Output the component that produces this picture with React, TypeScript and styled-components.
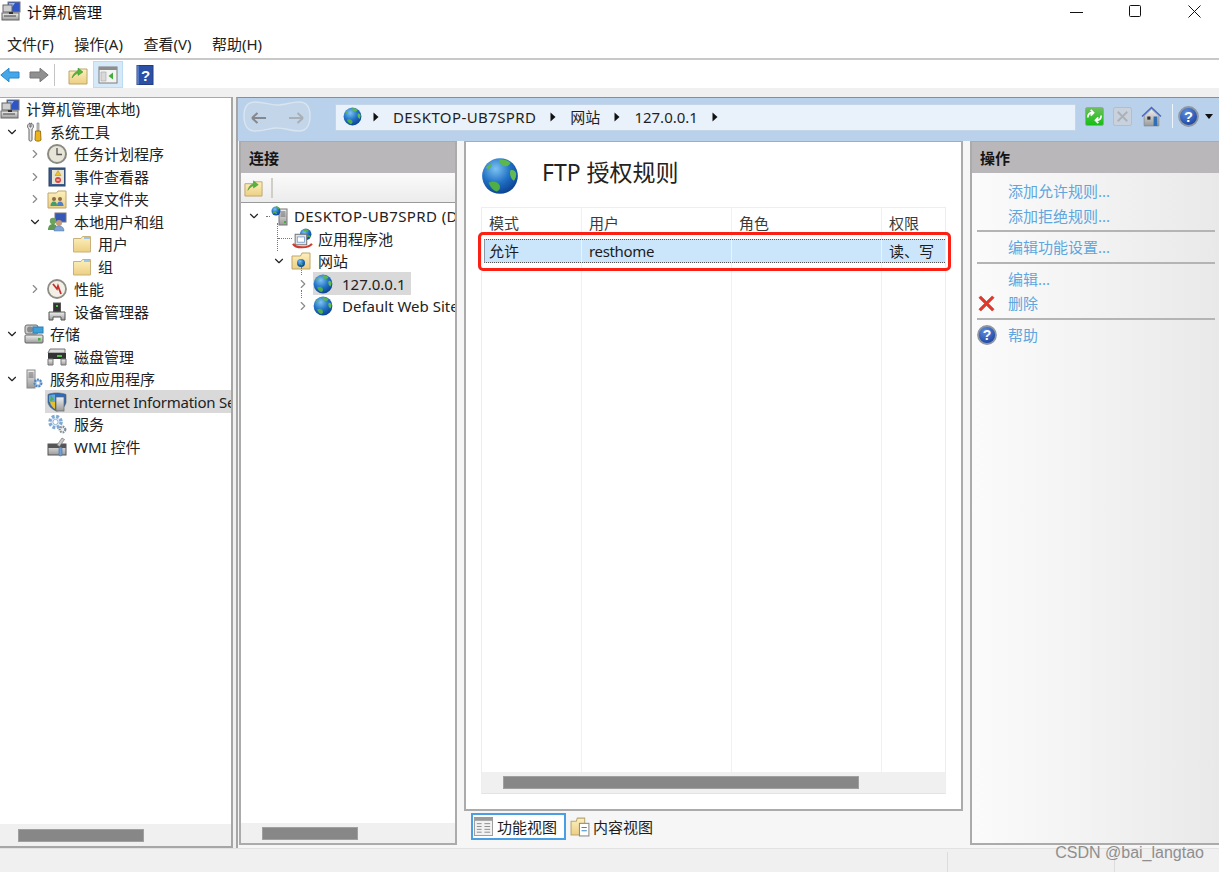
import React from 'react';
import styled, { createGlobalStyle } from 'styled-components';
import { ChevronDown, ChevronRight } from 'lucide-react';

const GlobalStyle = createGlobalStyle`
    html, body {
        margin: 0;
        padding: 0;
        background: #fff;
    }
    * {
        box-sizing: border-box;
    }
`;

const Window = styled.div`
    position: relative;
    width: 1219px;
    height: 872px;
    overflow: hidden;
    display: flex;
    flex-direction: column;
    background: #f0f0f0;
    color: #222;
    font-family: "Noto Sans", "Noto Sans CJK SC", sans-serif;
    font-size: 15px;
    line-height: 22px;
`;

const TitleBar = styled.div`
    height: 32px;
    flex: none;
    display: flex;
    align-items: flex-start;
    background: #fff;
    padding: 1px 0 0 1px;
`;

const TitleText = styled.div`
    margin-left: 6px;
    color: #111;
`;

const WindowButtons = styled.div`
    margin-left: auto;
    display: flex;
    gap: 46px;
    padding: 4px 18px 0 0;
`;

const MenuBar = styled.div`
    height: 28px;
    flex: none;
    display: flex;
    gap: 20.5px;
    padding: 1px 0 0 7px;
    background: #fff;
    border-bottom: 2px solid #c9c9c9;
`;

const ToolBar = styled.div`
    height: 28px;
    flex: none;
    display: flex;
    align-items: center;
    padding-top: 2px;
    background: #fff;
`;

const ToolSep = styled.div`
    width: 1px;
    height: 22px;
    margin: 0 13px 0 5px;
    background: #c4c4c4;
`;

const ToolToggle = styled.div`
    width: 30px;
    height: 27px;
    margin: -1px 12px 0 5px;
    display: flex;
    align-items: center;
    justify-content: center;
    background: #d5e9f8;
    border: 1px solid #bcdcf4;
`;

const Strip = styled.div`
    height: 9px;
    flex: none;
    background: #f0f0f0;
`;

const Main = styled.div`
    flex: 1;
    min-height: 0;
    display: flex;
    gap: 3px;
`;

const LeftPane = styled.div`
    width: 233px;
    flex: none;
    display: flex;
    flex-direction: column;
    background: #fff;
    border-top: 1px solid #a9a9a9;
    border-right: 2px solid #a6a6a6;
    border-bottom: 2px solid #a6a6a6;
`;

const TreeBox = styled.div<{ $top?: number }>`
    flex: 1;
    min-height: 0;
    overflow: hidden;
    position: relative;
    padding-top: ${(p) => p.$top ?? 0}px;
    background: #fff;
`;

const Row = styled.div<{ $indent: number }>`
    height: 22.5px;
    display: flex;
    align-items: center;
    white-space: nowrap;
    padding-left: ${(p) => p.$indent}px;
`;

const Twisty = styled.span<{ $open: boolean; $width: number }>`
    width: ${(p) => p.$width}px;
    flex: none;
    display: flex;
    align-items: center;
    padding-left: 5px;
    color: ${(p) => (p.$open ? '#222' : '#8a8a8a')};
`;

const Spacer = styled.span<{ $width: number }>`
    width: ${(p) => p.$width}px;
    flex: none;
`;

const Node = styled.span<{ $selected?: boolean; $gap: number; $grow?: boolean }>`
    display: flex;
    align-items: center;
    gap: ${(p) => p.$gap}px;
    height: 23px;
    padding-right: 5px;
    ${(p) => (p.$grow ? 'flex: 1; margin-left: -2px; padding-left: 2px;' : '')}
    background: ${(p) => (p.$selected ? '#d9d9d9' : 'transparent')};
`;

const Label = styled.span<{ $track?: number }>`
    letter-spacing: ${(p) => p.$track ?? 0}px;
`;

const HScroll = styled.div<{ $height: number; $pad: number }>`
    height: ${(p) => p.$height}px;
    flex: none;
    background: #f0f0f0;
    display: flex;
    align-items: center;
    padding-left: ${(p) => p.$pad}px;
`;

const Thumb = styled.div<{ $width: number; $height: number }>`
    width: ${(p) => p.$width}px;
    height: ${(p) => p.$height}px;
    background: #878787;
    border: 1px solid #a0a0a0;
`;

const IisPane = styled.div`
    flex: 1;
    min-width: 0;
    display: flex;
    flex-direction: column;
    border-top: 1px solid #8d8d8d;
    border-left: 2px solid #a6a6a6;
    background: #f6f6f6;
`;

const IisHeader = styled.div`
    height: 43px;
    flex: none;
    display: flex;
    align-items: flex-start;
    padding: 3px 0 0 5px;
    background: #b9d1ea;
`;

const AddressBar = styled.div`
    width: 741px;
    height: 27px;
    margin: 3px 0 0 24px;
    flex: none;
    display: flex;
    align-items: center;
    gap: 14px;
    padding: 0 0 2px 7px;
    background: #e9f1fa;
    border: 1px solid #c4d5e8;
`;

const AddressGlobe = styled.span`
    margin-right: -3px;
    display: flex;
`;

const Crumb = styled.span`
    color: #1f1f1f;
`;

const HeaderTools = styled.div`
    display: flex;
    align-items: center;
    margin: 3px 0 0 9px;
    gap: 9px;
`;

const HeaderSep = styled.span`
    width: 1px;
    height: 24px;
    margin: 0 -4px 0 1px;
    background: #eef4fb;
`;

const Panels = styled.div`
    flex: 1;
    min-height: 0;
    display: flex;
    padding: 0 0 3px 1px;
`;

const ConnPanel = styled.div`
    width: 218px;
    flex: none;
    display: flex;
    flex-direction: column;
    background: #fff;
    border: 2px solid #ababab;
    border-top-width: 1px;
`;

const PanelHeader = styled.div`
    height: 31px;
    flex: none;
    display: flex;
    align-items: center;
    padding-left: 8px;
    font-weight: 700;
    font-size: 15px;
    color: #151515;
    background: #b9b7b9;
`;

const ConnTools = styled.div`
    height: 30px;
    flex: none;
    display: flex;
    align-items: center;
    gap: 8px;
    padding-left: 3px;
    background: linear-gradient(#fafafa, #ececec);
    border-bottom: 1px solid #9a9a9a;
`;

const ConnToolSep = styled.span`
    width: 2px;
    height: 20px;
    background: #cfcfc8;
`;

const ConnectorV = styled.span<{ $left: number; $top: number; $height: number }>`
    position: absolute;
    left: ${(p) => p.$left}px;
    top: ${(p) => p.$top}px;
    height: ${(p) => p.$height}px;
    border-left: 1px dotted #777;
`;

const ConnectorH = styled.span<{ $width: number }>`
    width: ${(p) => p.$width}px;
    flex: none;
    border-top: 1px dotted #777;
`;

const CenterCol = styled.div`
    width: 513px;
    flex: none;
    display: flex;
    flex-direction: column;
    padding: 0 7px;
`;

const FeaturePanel = styled.div`
    height: 670px;
    flex: none;
    display: flex;
    flex-direction: column;
    padding: 15px 15px 15px 15px;
    background: #fff;
    border: 2px solid #ababab;
    border-top-width: 1px;
`;

const FeatureTitle = styled.div`
    height: 38px;
    flex: none;
    display: flex;
    align-items: center;
    gap: 23px;
    margin-bottom: 12px;
    font-size: 23px;
    color: #222;
`;

const TitleLabel = styled.span`
    margin-top: -8px;
`;

const Table = styled.div`
    position: relative;
    flex: 1;
    min-height: 0;
    display: flex;
    flex-direction: column;
    border: 1px solid #eceef2;
    border-bottom: 1px solid #e4e4e4;
`;

const Columns = styled.div`
    flex: 1;
    min-height: 0;
    display: flex;
`;

const Column = styled.div<{ $width?: number }>`
    ${(p) => (p.$width ? `width: ${p.$width}px; flex: none;` : 'flex: 1;')}
    display: flex;
    flex-direction: column;
    border-right: 1px solid #eef1f6;
    &:last-child {
        border-right: 0;
    }
`;

const HeadCell = styled.div`
    height: 31px;
    flex: none;
    padding: 4px 0 0 7px;
    color: #3b3b3b;
    white-space: nowrap;
`;

const BodyCell = styled.div<{ $first?: boolean }>`
    height: 24px;
    flex: none;
    display: flex;
    align-items: center;
    padding-left: ${(p) => (p.$first ? 4 : 7)}px;
    margin-left: ${(p) => (p.$first ? 2 : 0)}px;
    white-space: nowrap;
    color: #1c1c1c;
    background: #cbe5fb;
    border-top: 1px dotted #555;
    border-bottom: 1px dotted #555;
    ${(p) => (p.$first ? 'border-left: 1px solid #8a9aa8;' : '')}
`;

const RedMark = styled.div`
    position: absolute;
    left: -4px;
    top: 24px;
    width: 473px;
    height: 39px;
    border: 3px solid #fb2014;
    border-radius: 5px;
`;

const ViewTabs = styled.div`
    flex: 1;
    display: flex;
    align-items: flex-start;
    gap: 4px;
    padding: 2px 0 0 7px;
`;

const ViewTab = styled.div<{ $active?: boolean }>`
    height: 27px;
    display: flex;
    align-items: center;
    gap: ${(p) => (p.$active ? 4 : 2)}px;
    padding: 0 7px 0 ${(p) => (p.$active ? 1 : 0)}px;
    ${(p) => (p.$active ? 'background: #fff; border: 2px solid #4a9fe4;' : '')}
    color: #1c1c1c;
`;

const ActionsPanel = styled.div`
    flex: 1;
    min-width: 0;
    display: flex;
    flex-direction: column;
    background: linear-gradient(to right, #fbfbfb, #f4f4f4 40%, #e9e9e9);
    border-top: 1px solid #ababab;
    border-left: 2px solid #ababab;
    border-bottom: 2px solid #ababab;
`;

const ActionList = styled.div`
    padding: 6px 4px 0 5px;
    display: flex;
    flex-direction: column;
`;

const ActionRow = styled.div`
    height: 24.5px;
    display: flex;
    align-items: center;
    color: #5ea6de;
`;

const ActionIcon = styled.span`
    width: 31px;
    flex: none;
    display: flex;
    align-items: center;
`;

const ActionDivider = styled.div`
    height: 2px;
    margin: 2px 0 3px 0;
    background: #b4b4b4;
`;

const StatusBar = styled.div`
    height: 24px;
    flex: none;
    display: flex;
    background: #f0f0f0;
    border-top: 1px solid #e2e2e2;
`;

const StatusCell = styled.div<{ $width?: number }>`
    ${(p) => (p.$width ? `width: ${p.$width}px; flex: none;` : 'flex: 1;')}
    border-right: 1px solid #dcdcdc;
    margin-top: 3px;
`;

const Watermark = styled.div`
    position: absolute;
    right: 15px;
    bottom: 9px;
    font-family: "Liberation Sans", sans-serif;
    font-size: 16px;
    line-height: 20px;
    color: #8e8e8e;
`;

const Defs = styled.svg`
    position: absolute;
    width: 0;
    height: 0;
`;

const IconBox = styled.svg`
    flex: none;
    display: block;
`;

const DropCaretBox = styled(IconBox)`
    margin-left: -3px;
`;

type IconProps = { size?: number };

function Ico({ size = 20, vb = 20, children }: { size?: number; vb?: number; children: React.ReactNode }) {
    return (
        <IconBox width={size} height={size} viewBox={`0 0 ${vb} ${vb}`}>
            {children}
        </IconBox>
    );
}

function SharedDefs() {
    return (
        <Defs>
            <defs>
                <radialGradient id="globeSea" cx="38%" cy="30%" r="75%">
                    <stop offset="0%" stopColor="#7cc3f2" />
                    <stop offset="55%" stopColor="#1f6fc4" />
                    <stop offset="100%" stopColor="#0b3f8e" />
                </radialGradient>
                <linearGradient id="folderFill" x1="0" y1="0" x2="0" y2="1">
                    <stop offset="0%" stopColor="#fdf0bd" />
                    <stop offset="100%" stopColor="#eccf83" />
                </linearGradient>
                <linearGradient id="greyFill" x1="0" y1="0" x2="0" y2="1">
                    <stop offset="0%" stopColor="#f0f0f0" />
                    <stop offset="100%" stopColor="#9a9a9a" />
                </linearGradient>
                <linearGradient id="greenFill" x1="0" y1="0" x2="0" y2="1">
                    <stop offset="0%" stopColor="#6fbf60" />
                    <stop offset="100%" stopColor="#10c010" />
                </linearGradient>
                <radialGradient id="helpFill" cx="40%" cy="30%" r="75%">
                    <stop offset="0%" stopColor="#5f8fe0" />
                    <stop offset="100%" stopColor="#173f9c" />
                </radialGradient>
            </defs>
        </Defs>
    );
}

function Globe({ size = 20 }: IconProps) {
    return (
        <Ico size={size}>
            <circle cx="10" cy="10" r="9.4" fill="url(#globeSea)" />
            <path d="M4 13.5c2-1.2 4.5-.6 5.5.8 1 1.500.4 3.200-1.200 3.800-1.800-.3-3.400-2.400-4.300-4.600z" fill="#4fae45" />
            <path d="M9.500 1.500c2-.4 4.500.2 6 1.500-.5 1.400-2 2-3.500 1.800-1.200-.2-2.300-1.500-2.500-3.300z" fill="#5bb84e" />
            <path d="M15.500 7c1.200-.5 2.500.2 3 1.500.2 1.500-.4 3-1.200 4-1.500-.8-2.500-3.500-1.800-5.500z" fill="#62bb50" />
            <path d="M2.500 5.500c1-.9 2-1.500 3-1.800.2 1-.5 2.300-1.700 2.800z" fill="#5bb84e" />
        </Ico>
    );
}

function Folder({ size = 20 }: IconProps) {
    return (
        <Ico size={size}>
            <path d="M1.500 4.500V18h17V2.500h-8L9 4.500z" fill="url(#folderFill)" stroke="#c9b27a" />
            <path d="M12 3h6v2h-6z" fill="#9cc5e8" />
        </Ico>
    );
}

function UpFolder({ size = 20 }: IconProps) {
    return (
        <Ico size={size}>
            <path d="M1 6v13h18V4h-8L9.500 6z" fill="url(#folderFill)" stroke="#bfa66a" />
            <path d="M4 13c1-4 3-6 6-7V3l5 4-5 3.500V8c-2 .8-4 2.500-6 5z" fill="#56b33f" stroke="#3c8f2d" strokeWidth=".5" />
        </Ico>
    );
}

function BackArrow() {
    return (
        <Ico>
            <path d="M.8 10 9 3.200V7h10v6H9v3.800z" fill="#46a6ea" stroke="#2b86c8" />
        </Ico>
    );
}

function ForwardArrow() {
    return (
        <Ico>
            <path d="M19.200 10 11 3.200V7H1v6h10v3.800z" fill="#8f8f8f" stroke="#777" />
        </Ico>
    );
}

function PaneToggle() {
    return (
        <Ico>
            <rect x="1" y="2" width="18" height="16" fill="#f3f3f3" stroke="#7d7d7d" />
            <rect x="1" y="2" width="18" height="3" fill="#8d8d8d" />
            <path d="M3 7h5v9H3z" fill="#d9d9d9" stroke="#a5a5a5" strokeWidth=".6" />
            <path d="M15 7.500v7l-4.500-3.500z" fill="#3fae3a" />
        </Ico>
    );
}

function HelpBook() {
    return (
        <Ico size={20}>
            <rect x="2" y="0.500" width="16" height="19" fill="#2c50a5" stroke="#223c80" />
            <rect x="2" y="0.500" width="2" height="19" fill="#4f78c9" />
            <text x="10.500" y="15.500" fontSize="15" fontWeight="700" textAnchor="middle" fill="#fff" fontFamily="Liberation Sans, sans-serif">?</text>
        </Ico>
    );
}

function Computer({ size = 20 }: IconProps) {
    return (
        <Ico size={size}>
            <rect x="7" y="1" width="12" height="10" fill="#2d55c8" stroke="#777" />
            <path d="M8 2h6l-5 7H8z" fill="#9bb8f0" />
            <rect x="2" y="4" width="9" height="7" fill="#cfcfcf" stroke="#666" />
            <rect x="1" y="12" width="17" height="7" fill="url(#greyFill)" stroke="#666" />
            <path d="M3 15h12" stroke="#444" />
            <path d="M8 11h4v2H8z" fill="#333" />
        </Ico>
    );
}

function Tools({ size = 20 }: IconProps) {
    return (
        <Ico size={size}>
            <path d="M6 1C3 2 3 6 5 7v11c0 1.500 3 1.500 3 0V7c2-1 2-5-1-6v4H6z" fill="#e4e4e4" stroke="#666" />
            <path d="M13 1h2v8h-2z" fill="#c9c9c9" stroke="#777" strokeWidth=".6" />
            <path d="M11.500 9h5l.5 9c-1 1.500-5 1.500-6 0z" fill="#eeb21d" stroke="#9c7410" />
        </Ico>
    );
}

function Clock({ size = 20 }: IconProps) {
    return (
        <Ico size={size}>
            <circle cx="10" cy="10" r="9" fill="#e7e4d8" stroke="#8b8b83" strokeWidth="2" />
            <path d="M10 4v6.500h5" fill="none" stroke="#555" strokeWidth="1.300" />
        </Ico>
    );
}

function EventLog({ size = 20 }: IconProps) {
    return (
        <Ico size={size}>
            <rect x="2" y="1" width="16" height="18" fill="#3c5d8f" stroke="#2a3f66" />
            <rect x="5" y="3" width="12" height="14" fill="#e9e4d2" />
            <path d="M11 3.500l3 5H8z" fill="#eec22c" stroke="#a88518" strokeWidth=".5" />
            <circle cx="11" cy="13" r="3" fill="#d8453f" />
            <path d="M9.500 13h3" stroke="#fff" />
        </Ico>
    );
}

function SharedFolder({ size = 20 }: IconProps) {
    return (
        <Ico size={size}>
            <path d="M1 4v15h18V2h-8L9.500 4z" fill="url(#folderFill)" stroke="#bfa66a" />
            <circle cx="7" cy="10" r="2" fill="#8a6a4a" />
            <circle cx="13" cy="10" r="2" fill="#8a6a4a" />
            <path d="M3.500 17c0-3 1.500-4.500 3.500-4.500s3 1.500 3 4.500z" fill="#3f9e6a" />
            <path d="M10 17c0-3 1-4.500 3-4.500s3.500 1.500 3.500 4.500z" fill="#4f7fc8" />
        </Ico>
    );
}

function Users({ size = 20 }: IconProps) {
    return (
        <Ico size={size}>
            <rect x="8" y="1" width="11" height="9" fill="#3659b8" stroke="#777" />
            <circle cx="6" cy="9" r="3.200" fill="#6ea260" />
            <path d="M1 18c0-4 2-6 5-6s4 2 4 6z" fill="#5f9a55" />
            <circle cx="12" cy="11" r="3" fill="#c59a78" />
            <path d="M7 19c0-3.500 2-5 5-5s5 1.500 5 5z" fill="#7ea3d8" stroke="#55779f" strokeWidth=".5" />
        </Ico>
    );
}

function Perf({ size = 20 }: IconProps) {
    return (
        <Ico size={size}>
            <circle cx="10" cy="10" r="9" fill="#f1efe6" stroke="#8d8d85" strokeWidth="1.800" />
            <path d="M6 5l4 5 1-3 3 8" fill="none" stroke="#c9302c" strokeWidth="1.800" />
        </Ico>
    );
}

function Device({ size = 20 }: IconProps) {
    return (
        <Ico size={size}>
            <rect x="6.500" y="1" width="7" height="9" fill="#333" stroke="#555" />
            <rect x="9" y="3" width="2" height="2" fill="#4fc04a" />
            <path d="M2 10h16v8h-4v-3H6v3H2z" fill="url(#greyFill)" stroke="#555" />
        </Ico>
    );
}

function Storage({ size = 20 }: IconProps) {
    return (
        <Ico size={size}>
            <rect x="1" y="1" width="13" height="9" rx="2" fill="#c9c9c9" stroke="#6f6f6f" />
            <circle cx="6" cy="5.500" r="3" fill="#8a8a8a" />
            <rect x="9" y="3" width="10" height="6" fill="#3da0d8" stroke="#2b7fb5" />
            <rect x="1" y="11" width="18" height="8" rx="1" fill="url(#greyFill)" stroke="#666" />
            <rect x="14" y="14" width="2.500" height="2.500" fill="#3fae3a" />
        </Ico>
    );
}

function Disk({ size = 20 }: IconProps) {
    return (
        <Ico size={size}>
            <path d="M3 2h15v4H1z" fill="#ddd" stroke="#777" />
            <rect x="1" y="6" width="18" height="6" fill="#333" />
            <rect x="10" y="8" width="5" height="2" fill="#4fc04a" />
            <path d="M1 12h5v6H1zM14 12h5v6h-5z" fill="url(#greyFill)" stroke="#777" />
        </Ico>
    );
}

function ServerGear({ size = 20 }: IconProps) {
    return (
        <Ico size={size}>
            <rect x="3" y="1" width="8" height="18" fill="url(#greyFill)" stroke="#888" />
            <path d="M4.500 4h5M4.500 6h5M4.500 8h5" stroke="#666" />
            <circle cx="14" cy="14" r="3.500" fill="#9ec3e6" stroke="#4f84bc" strokeWidth="2" strokeDasharray="2 1" />
            <circle cx="14" cy="14" r="1.500" fill="#fff" />
        </Ico>
    );
}

function Iis({ size = 20 }: IconProps) {
    return (
        <Ico size={size}>
            <path d="M1 2.500C6 .5 13 .5 19 2.500v8C18 15 14 18 10 19 6 18 2 15 1 10.500z" fill="#2a6cbf" stroke="#555" strokeWidth=".6" />
            <path d="M2 3.500c2-.8 4-1 6-1.100V10H2z" fill="#63a8de" />
            <path d="M3 10h5v7C5.500 15.500 3.500 13 3 10z" fill="#e8bf2c" />
            <rect x="9" y="5" width="8" height="14" fill="url(#greyFill)" stroke="#666" strokeWidth=".7" />
            <path d="M4 3l3 5-4 1z" fill="#52ad47" />
        </Ico>
    );
}

function Gears({ size = 20 }: IconProps) {
    return (
        <Ico size={size}>
            <circle cx="8.500" cy="8" r="5.600" fill="#e4eef8" stroke="#7fa9d4" strokeWidth="3.400" strokeDasharray="2.800 1.600" />
            <circle cx="8.500" cy="8" r="2.600" fill="#fff" stroke="#7fa5c9" strokeWidth=".8" />
            <circle cx="15.500" cy="15.500" r="2.800" fill="#eee" stroke="#7f8b96" strokeWidth="2.200" strokeDasharray="1.600 1" />
        </Ico>
    );
}

function Wmi({ size = 20 }: IconProps) {
    return (
        <Ico size={size}>
            <rect x="1" y="7" width="18" height="11" fill="url(#greyFill)" stroke="#555" />
            <rect x="1" y="7" width="18" height="4" fill="#555" />
            <path d="M15 1l2.500 1.500-5 7L10 8z" fill="#c9c9c9" stroke="#666" strokeWidth=".6" />
            <rect x="12" y="10" width="3" height="9" rx="1.500" fill="#6d9fd8" stroke="#3f6fa8" strokeWidth=".6" />
        </Ico>
    );
}

function AppPool({ size = 21 }: IconProps) {
    return (
        <Ico size={size}>
            <circle cx="13" cy="6" r="5.500" fill="url(#globeSea)" />
            <path d="M11 3c1.500-1 3-1 4.500 0M14 8c1-.5 2.500-.5 3.500.5" fill="none" stroke="#56b33f" strokeWidth="1.400" />
            <rect x="3" y="6" width="11" height="10" fill="#e5e5e5" stroke="#777" />
            <rect x="5" y="8.500" width="7" height="5" fill="#fff" stroke="#5f8fc9" strokeWidth=".7" />
            <path d="M1 15c2 4.500 15 4.500 18 0" fill="none" stroke="#cc3a30" strokeWidth="2" />
        </Ico>
    );
}

function ServerGlobe({ size = 20 }: IconProps) {
    return (
        <Ico size={size}>
            <rect x="9" y="3" width="8" height="16" fill="url(#greyFill)" stroke="#777" />
            <path d="M10.500 6h5M10.500 8h5M10.500 10h5" stroke="#666" />
            <rect x="14" y="15" width="2" height="2" fill="#3fae3a" />
            <circle cx="6" cy="5" r="4.500" fill="url(#globeSea)" />
            <path d="M3 7c1-1 3-1 3.500 1M6 1c1.500 0 3 1 3 2" fill="none" stroke="#56b33f" strokeWidth="1.500" />
        </Ico>
    );
}

function SitesFolder({ size = 20 }: IconProps) {
    return (
        <Ico size={size}>
            <path d="M1 5v13h18V2h-8L9.500 5z" fill="url(#folderFill)" stroke="#bfa66a" />
            <circle cx="10" cy="12" r="4" fill="url(#globeSea)" />
            <path d="M8 13c1-1 2.500-.5 3 1" fill="none" stroke="#56b33f" strokeWidth="1.300" />
        </Ico>
    );
}

function NavPill() {
    return (
        <IconBox width="68" height="31" viewBox="0 0 68 31">
            <path d="M12 1C22 1 26 4 34 4S48 1 56 1c8 0 11 6 11 14s-3 15-11 15c-8 0-14-3-22-3S22 30 12 30C4 30 1 23 1 15S4 1 12 1z" fill="#c3d5e8" stroke="#d8e4f0" strokeWidth="1.500" />
            <path d="M23 17H9M9 17l5.500-5M9 17l5.500 5" fill="none" stroke="#85898e" strokeWidth="2" />
            <path d="M46 17h14M60 17l-5.500-5M60 17l-5.500 5" fill="none" stroke="#a9afb6" strokeWidth="2" />
        </IconBox>
    );
}

function Caret() {
    return (
        <IconBox width="6" height="10" viewBox="0 0 6 10">
            <path d="M.500 .500 5.500 5 .500 9.500z" fill="#111" />
        </IconBox>
    );
}

function RefreshGreen() {
    return (
        <Ico size={19}>
            <rect x=".500" y=".500" width="19" height="19" rx="2" fill="url(#greenFill)" stroke="#9aa59a" />
            <path d="M3 11c0-3 2-5 5-5M6 3l3 3-3 3M17 9c0 3-2 5-5 5M14 17l-3-3 3-3" fill="none" stroke="#fff" strokeWidth="1.800" />
        </Ico>
    );
}

function StopGrey() {
    return (
        <Ico size={19}>
            <rect x=".500" y=".500" width="19" height="19" rx="2" fill="#c9d2dc" stroke="#b3bcc6" />
            <path d="M5 5l10 10M15 5 5 15" stroke="#aab1b9" strokeWidth="2" />
        </Ico>
    );
}

function Home() {
    return (
        <Ico size={21}>
            <path d="M1 10 10 1.500l9 8.500" fill="#e6e6e0" stroke="#4a6cc0" strokeWidth="1.600" />
            <path d="M3 9.500V19h14V9.500L10 3z" fill="url(#greyFill)" stroke="#7f8a96" strokeWidth=".7" />
            <rect x="6" y="10" width="3" height="3" fill="#333" />
            <rect x="12" y="10" width="3.500" height="9" fill="#2f6fb5" />
        </Ico>
    );
}

function HelpRound({ size = 21 }: IconProps) {
    return (
        <Ico size={size}>
            <circle cx="10" cy="10" r="9" fill="url(#helpFill)" stroke="#8f97a3" strokeWidth="1.800" />
            <text x="10" y="15" fontSize="14" fontWeight="700" textAnchor="middle" fill="#fff" fontFamily="Liberation Sans, sans-serif">?</text>
        </Ico>
    );
}

function DropCaret() {
    return (
        <DropCaretBox width="8" height="5" viewBox="0 0 8 5">
            <path d="M0 0h8L4 5z" fill="#111" />
        </DropCaretBox>
    );
}

function RedCross() {
    return (
        <Ico size={19}>
            <path d="M2 4l2-2 6 6 6-6 2 2-6 6 6 6-2 2-6-6-6 6-2-2 6-6z" fill="#dd3a2e" stroke="#c22c22" strokeWidth=".6" />
        </Ico>
    );
}

function FeatureViewIcon() {
    return (
        <Ico size={19}>
            <rect x=".500" y=".500" width="19" height="19" fill="#f2f2f2" stroke="#9a9a9a" />
            <rect x=".500" y=".500" width="19" height="3.500" fill="#9a9a9a" />
            <path d="M3 7h5M3 10h5M3 13h5M3 16h5M11 7h6M11 10h6M11 13h6M11 16h6" stroke="#8a8a8a" />
        </Ico>
    );
}

function ContentViewIcon() {
    return (
        <Ico size={21}>
            <path d="M1 5h5l1-3h7v16H1z" fill="url(#folderFill)" stroke="#b9a673" />
            <rect x="9" y="7" width="9" height="12" fill="#fff" stroke="#8a8a8a" />
            <path d="M11 11h5M11 14h5" stroke="#3d86c8" />
        </Ico>
    );
}

function WinMin() {
    return (
        <IconBox width="13" height="13" viewBox="0 0 13 13">
            <path d="M0 7.500h13" stroke="#111" />
        </IconBox>
    );
}

function WinMax() {
    return (
        <IconBox width="13" height="13" viewBox="0 0 13 13">
            <rect x=".500" y=".500" width="11" height="11" rx="1" fill="none" stroke="#111" />
        </IconBox>
    );
}

function WinClose() {
    return (
        <IconBox width="13" height="13" viewBox="0 0 13 13">
            <path d="M.500 .500l12 12M12.500 .500l-12 12" stroke="#111" />
        </IconBox>
    );
}

// 왼쪽 트리: indent 와 open 값만으로 계층을 표현한다.
type TreeItem = {
    label: string;
    icon: React.ReactNode;
    indent: number;
    open?: boolean;
    selected?: boolean;
};

const leftTree: TreeItem[] = [
    { label: '计算机管理(本地)', icon: <Computer />, indent: 0 },
    { label: '系统工具', icon: <Tools />, indent: 0, open: true },
    { label: '任务计划程序', icon: <Clock />, indent: 23, open: false },
    { label: '事件查看器', icon: <EventLog />, indent: 23, open: false },
    { label: '共享文件夹', icon: <SharedFolder />, indent: 23, open: false },
    { label: '本地用户和组', icon: <Users />, indent: 23, open: true },
    { label: '用户', icon: <Folder />, indent: 72 },
    { label: '组', icon: <Folder />, indent: 72 },
    { label: '性能', icon: <Perf />, indent: 23, open: false },
    { label: '设备管理器', icon: <Device />, indent: 47 },
    { label: '存储', icon: <Storage />, indent: 0, open: true },
    { label: '磁盘管理', icon: <Disk />, indent: 47 },
    { label: '服务和应用程序', icon: <ServerGear />, indent: 0, open: true },
    { label: 'Internet Information Services (IIS)管理器', icon: <Iis />, indent: 47, selected: true },
    { label: '服务', icon: <Gears />, indent: 47 },
    { label: 'WMI 控件', icon: <Wmi />, indent: 47 },
];

function LeftRow({ item }: { item: TreeItem }) {
    const hasTwisty = item.open !== undefined;
    const gap = item.indent === 0 || item.indent === 72 ? 6 : 7;
    return (
        <Row $indent={item.indent}>
            {hasTwisty && (
                <Twisty $open={!!item.open} $width={24}>
                    {item.open ? <ChevronDown size={14} strokeWidth={2} /> : <ChevronRight size={14} strokeWidth={2} />}
                </Twisty>
            )}
            <Node $gap={gap} $selected={item.selected} $grow={item.selected}>
                {item.icon}
                <Label $track={item.selected ? -0.25 : 0}>{item.label}</Label>
            </Node>
        </Row>
    );
}

const actions: (null | { label: string; icon?: React.ReactNode })[] = [
    { label: '添加允许规则...' },
    { label: '添加拒绝规则...' },
    null,
    { label: '编辑功能设置...' },
    null,
    { label: '编辑...' },
    { label: '删除', icon: <RedCross /> },
    null,
    { label: '帮助', icon: <HelpRound size={20} /> },
];

function App() {
    return (
        <Window>
            <GlobalStyle />
            <SharedDefs />
            <TitleBar>
                <Computer />
                <TitleText>计算机管理</TitleText>
                <WindowButtons>
                    <WinMin />
                    <WinMax />
                    <WinClose />
                </WindowButtons>
            </TitleBar>
            <MenuBar>
                <span>文件(F)</span>
                <span>操作(A)</span>
                <span>查看(V)</span>
                <span>帮助(H)</span>
            </MenuBar>
            <ToolBar>
                <BackArrow />
                <Spacer $width={9} />
                <ForwardArrow />
                <ToolSep />
                <UpFolder />
                <ToolToggle>
                    <PaneToggle />
                </ToolToggle>
                <HelpBook />
            </ToolBar>
            <Strip />
            <Main>
                <LeftPane>
                    <TreeBox>
                        {leftTree.map((item) => (
                            <LeftRow key={item.label} item={item} />
                        ))}
                    </TreeBox>
                    <HScroll $height={22} $pad={18}>
                        <Thumb $width={126} $height={13} />
                    </HScroll>
                </LeftPane>
                <IisPane>
                    <IisHeader>
                        <NavPill />
                        <AddressBar>
                            <AddressGlobe>
                                <Globe size={19} />
                            </AddressGlobe>
                            <Caret />
                            <Crumb>
                                <Label $track={0.4}>DESKTOP-UB7SPRD</Label>
                            </Crumb>
                            <Caret />
                            <Crumb>网站</Crumb>
                            <Caret />
                            <Crumb>127.0.0.1</Crumb>
                            <Caret />
                        </AddressBar>
                        <HeaderTools>
                            <RefreshGreen />
                            <StopGrey />
                            <Home />
                            <HeaderSep />
                            <HelpRound />
                            <DropCaret />
                        </HeaderTools>
                    </IisHeader>
                    <Panels>
                        <ConnPanel>
                            <PanelHeader>连接</PanelHeader>
                            <ConnTools>
                                <UpFolder size={19} />
                                <ConnToolSep />
                            </ConnTools>
                            <TreeBox $top={2}>
                                <ConnectorV $left={36} $top={20} $height={28} />
                                <ConnectorV $left={60} $top={64} $height={8} />
                                <ConnectorV $left={60} $top={87} $height={8} />
                                <Row $indent={1}>
                                    <Twisty $open $width={24}>
                                        <ChevronDown size={14} strokeWidth={2} />
                                    </Twisty>
                                    <ConnectorH $width={4} />
                                    <Node $gap={4}>
                                        <ServerGlobe />
                                        <Label $track={0.4}>DESKTOP-UB7SPRD (DESKTOP-UB7SPRD\Administrator)</Label>
                                    </Node>
                                </Row>
                                <Row $indent={37}>
                                    <ConnectorH $width={14} />
                                    <Node $gap={5}>
                                        <AppPool />
                                        应用程序池
                                    </Node>
                                </Row>
                                <Row $indent={26}>
                                    <Twisty $open $width={24}>
                                        <ChevronDown size={14} strokeWidth={2} />
                                    </Twisty>
                                    <Node $gap={7}>
                                        <SitesFolder />
                                        网站
                                    </Node>
                                </Row>
                                <Row $indent={50}>
                                    <Twisty $open={false} $width={22}>
                                        <ChevronRight size={14} strokeWidth={2} />
                                    </Twisty>
                                    <Node $gap={9} $selected>
                                        <Globe />
                                        127.0.0.1
                                    </Node>
                                </Row>
                                <Row $indent={50}>
                                    <Twisty $open={false} $width={22}>
                                        <ChevronRight size={14} strokeWidth={2} />
                                    </Twisty>
                                    <Node $gap={9}>
                                        <Globe />
                                        Default Web Site
                                    </Node>
                                </Row>
                            </TreeBox>
                            <HScroll $height={20} $pad={21}>
                                <Thumb $width={96} $height={13} />
                            </HScroll>
                        </ConnPanel>
                        <CenterCol>
                            <FeaturePanel>
                                <FeatureTitle>
                                    <Globe size={38} />
                                    <TitleLabel>FTP 授权规则</TitleLabel>
                                </FeatureTitle>
                                <Table>
                                    <Columns>
                                        <Column $width={100}>
                                            <HeadCell>模式</HeadCell>
                                            <BodyCell $first>允许</BodyCell>
                                        </Column>
                                        <Column $width={150}>
                                            <HeadCell>用户</HeadCell>
                                            <BodyCell>
                                                <Label $track={-0.35}>resthome</Label>
                                            </BodyCell>
                                        </Column>
                                        <Column $width={150}>
                                            <HeadCell>角色</HeadCell>
                                            <BodyCell />
                                        </Column>
                                        <Column>
                                            <HeadCell>权限</HeadCell>
                                            <BodyCell>读、写</BodyCell>
                                        </Column>
                                    </Columns>
                                    <HScroll $height={21} $pad={21}>
                                        <Thumb $width={356} $height={13} />
                                    </HScroll>
                                    <RedMark />
                                </Table>
                            </FeaturePanel>
                            <ViewTabs>
                                <ViewTab $active>
                                    <FeatureViewIcon />
                                    功能视图
                                </ViewTab>
                                <ViewTab>
                                    <ContentViewIcon />
                                    内容视图
                                </ViewTab>
                            </ViewTabs>
                        </CenterCol>
                        <ActionsPanel>
                            <PanelHeader>操作</PanelHeader>
                            <ActionList>
                                {actions.map((a, i) =>
                                    a ? (
                                        <ActionRow key={i}>
                                            <ActionIcon>{a.icon}</ActionIcon>
                                            {a.label}
                                        </ActionRow>
                                    ) : (
                                        <ActionDivider key={i} />
                                    ),
                                )}
                            </ActionList>
                        </ActionsPanel>
                    </Panels>
                </IisPane>
            </Main>
            <StatusBar>
                <StatusCell $width={948} />
                <StatusCell $width={167} />
            </StatusBar>
            <Watermark>CSDN @bai_langtao</Watermark>
        </Window>
    );
}

export default App;
